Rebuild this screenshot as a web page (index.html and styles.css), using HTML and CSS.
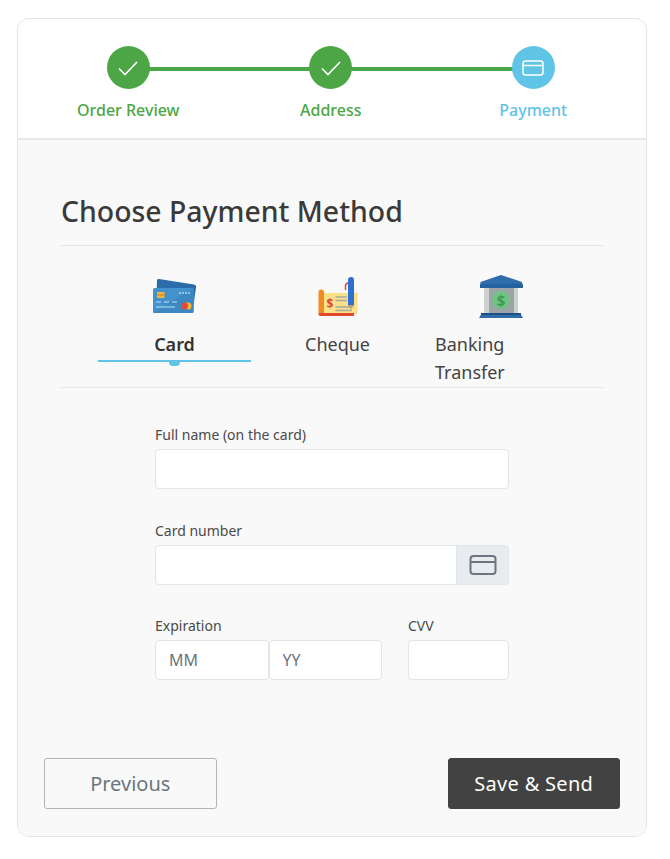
FILE: index.html
```html
<!DOCTYPE html>
<html lang="en">
<head>
  <meta charset="UTF-8">
  <title>Payment</title>
  <link rel="stylesheet" href="styles.css">
</head>
<body>
  <article class="wizard">
    <ol class="steps">
      <li class="step done">
        <span class="step-icon">
          <svg width="22" height="22" viewBox="0 0 22 22" fill="none" stroke="#fff" stroke-width="1.6"><path d="M2 11.5l6 6L20 5"/></svg>
        </span>
        <span class="step-label">Order Review</span>
      </li>
      <li class="step done">
        <span class="step-icon">
          <svg width="22" height="22" viewBox="0 0 22 22" fill="none" stroke="#fff" stroke-width="1.6"><path d="M2 11.5l6 6L20 5"/></svg>
        </span>
        <span class="step-label">Address</span>
      </li>
      <li class="step current">
        <span class="step-icon">
          <svg width="22" height="18" viewBox="0 0 22 18" fill="none" stroke="#fff" stroke-width="1.5"><rect x="1" y="2" width="20" height="14" rx="2.5"/><path d="M1 6.5h20"/></svg>
        </span>
        <span class="step-label">Payment</span>
      </li>
    </ol>

    <section class="panel">
      <h2 class="title">Choose Payment Method</h2>

      <div class="tabs">
        <a class="tab active">
          <svg class="tab-icon" width="44" height="44" viewBox="1 0 44 44">
            <path d="M7 4l35 5.500q2.500.5 2 3l-3 21H4l1-28q0-2 2-1.500z" fill="#2d6cab"/>
            <rect x="1" y="13" width="40.500" height="25" rx="1.500" fill="#4391cd"/>
            <path d="M1 38l40.500-25v23.500q0 1.500-1.500 1.500z" fill="#3d88c3"/>
            <rect x="5" y="17" width="7.500" height="6" fill="#f2b53a"/>
            <path d="M5 20h7.500" stroke="#d9762b"/>
            <path d="M27 18h11" stroke="#8fc6e6" stroke-width="2" stroke-dasharray="2 1"/>
            <path d="M4 27h5m3 0h5m3 0h5M4 32h19" stroke="#8fc6e6" stroke-width="1.300"/>
            <circle cx="36" cy="31" r="3.500" fill="#f2b53a"/>
            <circle cx="32.500" cy="31" r="3.500" fill="#df4b3a"/>
          </svg>
          <span class="tab-label">Card</span>
        </a>
        <a class="tab">
          <svg class="tab-icon" width="44" height="44" viewBox="0 0 44 44">
            <path d="M6 18h35.500v21H6z" fill="#fbe08a"/>
            <path d="M2.500 38H38v3H4.500q-2 0-2-2z" fill="#e2472f"/>
            <path d="M2.500 17q0-2.500 2.700-2.500T8 17v21H2.500z" fill="#f08c22"/>
            <text x="14" y="33" class="cheque-sign">$</text>
            <path d="M19.500 22H31m-11.500 3.500H31M19.500 32H36m-16.500 3.500H36" stroke="#a9a9a0" stroke-width="1.300"/>
            <path d="M29.500 15v-4q0-3 3-3" fill="none" stroke="#e2472f" stroke-width="1.500"/>
            <path d="M32 5q0-3 3-3t3 3v25l-3 4-3-4z" fill="#2f6fd0"/>
            <path d="M32 30l3 4 3-4z" fill="#c9a468"/>
          </svg>
          <span class="tab-label">Cheque</span>
        </a>
        <a class="tab">
          <svg class="tab-icon" width="44" height="44" viewBox="0 0 44 44">
            <path d="M22 0l21 7 1 6H1l.5-6z" fill="#2e6cab"/>
            <rect x="1" y="9" width="43" height="4" rx="1" fill="#24619f"/>
            <rect x="5" y="13" width="34" height="25" fill="#cdd1d2"/>
            <rect x="10" y="13" width="25" height="25" fill="#9da4a8"/>
            <circle cx="22" cy="25" r="9" fill="#6fc383"/>
            <text x="22" y="30.500" class="bank-sign">$</text>
            <path d="M3 38h38l3 5H0z" fill="#2e6cab"/>
            <rect x="2" y="38" width="40" height="2" fill="#1c4f85"/>
          </svg>
          <span class="tab-label tab-label-wrap">Banking Transfer</span>
        </a>
      </div>

      <form class="card-form">
        <div class="field">
          <label class="field-label">Full name (on the card)</label>
          <input class="input" type="text">
        </div>
        <div class="field">
          <label class="field-label">Card number</label>
          <div class="input-group">
            <input class="input" type="text">
            <span class="input-addon">
              <svg width="28" height="22" viewBox="0 0 28 22" fill="none" stroke="#6c757d" stroke-width="2"><rect x="1.500" y="2" width="25" height="18" rx="3"/><path d="M1.500 8h25"/></svg>
            </span>
          </div>
        </div>
        <div class="field-row">
          <div class="field">
            <label class="field-label">Expiration</label>
            <div class="input-pair">
              <input class="input" type="text" placeholder="MM">
              <input class="input" type="text" placeholder="YY">
            </div>
          </div>
          <div class="field">
            <label class="field-label">CVV</label>
            <input class="input" type="text">
          </div>
        </div>
      </form>

      <div class="actions">
        <button type="button" class="btn btn-prev">Previous</button>
        <button type="button" class="btn btn-save">Save &amp; Send</button>
      </div>
    </section>
  </article>
</body>
</html>
```

FILE: styles.css
```css
* {
    box-sizing: border-box;
}

body {
    margin: 0;
    padding: 18px 23px 22px 17px;
    background: #fff;
    font-family: "Noto Sans", "Open Sans", sans-serif;
    color: #343a40;
}

.wizard {
    border: 1px solid #e4e4e4;
    border-radius: 12px;
    overflow: hidden;
    background: #fff;
}

/* steps */
.steps {
    display: grid;
    grid-template-columns: repeat(3, 202.5px);
    margin: 0;
    padding: 27px 0 16px 9px;
    list-style: none;
    border-bottom: 2px solid #e9e9e9;
}

.step {
    position: relative;
    display: flex;
    flex-direction: column;
    align-items: center;
    gap: 9px;
}

.step-icon {
    position: relative;
    z-index: 1;
    display: flex;
    align-items: center;
    justify-content: center;
    width: 43px;
    height: 43px;
    border-radius: 50%;
    background: #4ca645;
}

.step.done::after {
    content: "";
    position: absolute;
    top: 21px;
    left: 50%;
    width: 100%;
    height: 4px;
    background: #4ca645;
}

.step-label {
    font-size: 16px;
    line-height: 24px;
    font-weight: 500;
    color: #4ca645;
}

.step.current .step-icon {
    background: #5fc4e6;
}

.step.current .step-label {
    color: #5fc4e6;
}

/* panel */
.panel {
    padding: 50px 26px 27px;
    background: #f9f9f9;
}

.title {
    margin: 0 17px;
    padding-bottom: 13px;
    border-bottom: 1px solid #e4e4e4;
    font-size: 28.4px;
    line-height: 42px;
    font-weight: 500;
    color: #3a3a3a;
}

/* tabs */
.tabs {
    display: flex;
    gap: 10px;
    height: 142px;
    margin: 0 17px;
    padding: 29px 0 0 37px;
    border-bottom: 1px solid #e4e4e4;
}

.tab {
    position: relative;
    display: flex;
    flex-direction: column;
    align-items: center;
    width: 153px;
    height: 87px;
    font-size: 18px;
    line-height: 28px;
    color: #444;
}

.tab-icon {
    flex: none;
    margin-bottom: 11px;
}

.tab.active {
    border-bottom: 2px solid #5fc4e6;
    font-weight: 600;
    color: #333;
}

.tab.active::after {
    content: "";
    position: absolute;
    left: 71px;
    bottom: -6px;
    width: 11px;
    height: 4px;
    border-radius: 0 0 6px 6px;
    background: #5fc4e6;
}

.tab-label-wrap {
    align-self: flex-start;
    width: 80px;
    margin-left: 11px;
}

.cheque-sign {
    font-family: "Noto Sans", sans-serif;
    font-size: 12px;
    font-weight: 700;
    text-anchor: middle;
    fill: #e2472f;
}

.bank-sign {
    font-family: "Noto Sans", sans-serif;
    font-size: 15px;
    font-weight: 700;
    text-anchor: middle;
    fill: #3d9a55;
}

/* form */
.card-form {
    width: 354px;
    margin: 36px 0 0 111px;
}

.field {
    margin-bottom: 30.5px;
}

.field-label {
    display: block;
    margin-bottom: 4px;
    font-size: 14px;
    line-height: 21px;
    color: #4a4a4a;
}

.input {
    display: block;
    width: 100%;
    min-width: 0;
    height: 40px;
    padding: 0 13px;
    border: 1px solid #e1e4e8;
    border-radius: 4px;
    background: #fff;
    font-family: inherit;
    font-size: 16px;
}

.input::placeholder {
    color: #6c757d;
}

.input-group {
    display: flex;
}

.input-group .input {
    border-radius: 4px 0 0 4px;
}

.input-pair {
    display: flex;
}

.input-addon {
    flex: none;
    display: flex;
    align-items: center;
    justify-content: center;
    width: 53px;
    margin-left: -1px;
    border: 1px solid #e1e4e8;
    border-radius: 0 4px 4px 0;
    background: #e9ecef;
}

.field-row {
    display: grid;
    grid-template-columns: 227px 101px;
    gap: 26px;
}

.field-row .field {
    margin-bottom: 0;
}

/* buttons */
.actions {
    display: flex;
    justify-content: space-between;
    margin-top: 78px;
}

.btn {
    width: 172.5px;
    height: 51px;
    border: 1px solid #adb5bd;
    border-radius: 3px;
    font-family: inherit;
    font-size: 20px;
}

.btn-prev {
    background: transparent;
    color: #6c757d;
}

.btn-save {
    border-color: #424242;
    background: #424242;
    color: #fff;
    letter-spacing: .3px;
}
```
